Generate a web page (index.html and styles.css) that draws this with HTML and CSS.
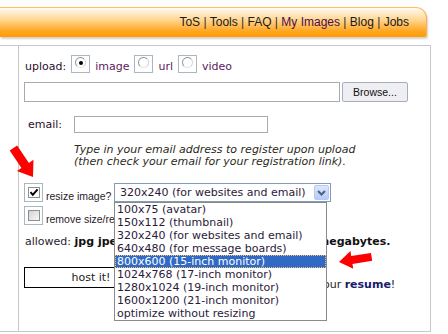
FILE: index.html
```html
<!DOCTYPE html>
<html lang="en">
<head>
    <meta charset="UTF-8">
    <title>Upload</title>
    <link rel="stylesheet" href="styles.css">
</head>
<body>

    <div class="topbar">
        <div class="nav"><a href="#">ToS</a> | <a href="#">Tools</a> | <a href="#">FAQ</a> | <a href="#" class="visited">My Images</a> | <a href="#">Blog</a> | <a href="#">Jobs</a></div>
    </div>

    <div class="main">
        <div class="side"></div>
        <div class="content">

            <div class="row upload-row">
                <span class="lbl upload-lbl">upload:</span>
                <span class="radio on"><span class="ring"></span></span>
                <span class="opt">image</span>
                <span class="radio"><span class="ring"></span></span>
                <span class="opt">url</span>
                <span class="radio"><span class="ring"></span></span>
                <span class="opt">video</span>
            </div>

            <div class="row file-row">
                <span class="field file-field"></span>
                <span class="browse">Browse...</span>
            </div>

            <div class="row email-row">
                <span class="lbl email-lbl">email:</span>
                <span class="field email-field"></span>
            </div>

            <p class="hint">Type in your email address to register upon upload<br>(then check your email for your registration link).</p>

            <div class="row check-row">
                <span class="check on"><span class="box"><svg width="10" height="9" viewBox="0 0 10 9"><path d="M1.5 4.2 L3.8 6.8 L8.6 1.4" fill="none" stroke="#000" stroke-width="2"/></svg></span></span>
                <span class="small resize-lbl">resize image?</span>
                <div class="select">
                    <span class="select-text">320x240 (for websites and email)</span>
                    <span class="select-btn"><svg width="9" height="6" viewBox="0 0 9 6"><path d="M1 1 L4.5 4.5 L8 1" fill="none" stroke="#4d6185" stroke-width="2"/></svg></span>
                    <ul class="options">
                        <li>100x75 (avatar)</li>
                        <li>150x112 (thumbnail)</li>
                        <li>320x240 (for websites and email)</li>
                        <li>640x480 (for message boards)</li>
                        <li class="sel">800x600 (15-inch monitor)</li>
                        <li>1024x768 (17-inch monitor)</li>
                        <li>1280x1024 (19-inch monitor)</li>
                        <li>1600x1200 (21-inch monitor)</li>
                        <li>optimize without resizing</li>
                    </ul>
                </div>
            </div>

            <div class="row check-row2">
                <span class="check"><span class="box"></span></span>
                <span class="small">remove size/resolution bar from thumbnail</span>
            </div>

            <p class="allowed">allowed: <b>jpg jpeg png gif bmp tif tiff swf &lt;= 1.5 megabytes.</b></p>

            <div class="row host-row">
                <button class="host">host it!</button>
                <span class="resume-note">We're hiring! Send us your <a href="#">resume</a>!</span>
            </div>

        </div>
    </div>

    <svg class="arrows" width="448" height="334" viewBox="0 0 448 334">
        <polygon transform="translate(33 177) rotate(56)" points="0,0 -14,-10 -14,-4.5 -35,-4.5 -35,4.5 -14,4.5 -14,10" fill="#f00"/>
        <polygon transform="translate(339 262) rotate(171)" points="0,0 -13,-9 -13,-4 -33,-4 -33,4 -13,4 -13,9" fill="#f00"/>
    </svg>

</body>
</html>
```

FILE: styles.css
```css
* { box-sizing: border-box; margin: 0; padding: 0; }
body {
    font-family: "DejaVu Sans", Verdana, sans-serif;
    font-size: 11px;
    color: #2a1a2a;
    background: #fff;
    position: relative;
    width: 448px;
    height: 334px;
    overflow: hidden;
}
.topbar {
    margin-top: 7px;
    width: 427px;
    height: 30px;
    border-top: 1px solid #fdbf6a;
    border-right: 1px solid #fcb24c;
    border-radius: 0 11px 2px 0;
    background: linear-gradient(#fffaf2, #ffdca0 35%, #ffa620 80%, #ff9c00);
    box-shadow: 1px 2px 2px rgba(0, 0, 0, 0.18);
    text-align: right;
    padding-right: 17px;
}
.nav {
    font-family: "Liberation Sans", Arial, sans-serif;
    font-size: 12px;
    line-height: 28px;
    color: #333;
}
.nav a { color: #1a1a1a; text-decoration: none; }
.nav .visited { color: #4b0f4b; }

.main {
    margin-top: 8px;
    width: 431px;
    height: 287px;
    display: flex;
    border: 1px solid #c8c8c8;
    border-left: none;
}
.side {
    width: 19px;
    border-right: 1px solid #c8c8c8;
}
.content {
    flex: 1;
    padding: 9px 0 0 5px;
}
.row { display: flex; }

.upload-row {
    height: 18px;
    align-items: flex-end;
    gap: 5px;
}
.lbl, .opt { line-height: 12px; }
.upload-lbl { margin-left: 1px; color: #2a0f2a; }
.opt { color: #5c1a5c; }
.radio {
    width: 19px;
    height: 18px;
    border: 1px solid #a9b6c4;
    display: flex;
    justify-content: center;
    padding-top: 1px;
}
.ring {
    width: 11px;
    height: 11px;
    border-radius: 50%;
    border: 1px solid;
    border-color: #8c8c8c #d4d4d4 #e4e4e4 #9a9a9a;
    background: #fff;
    display: flex;
    align-items: center;
    justify-content: center;
}
.radio.on .ring::after {
    content: "";
    width: 4px;
    height: 4px;
    border-radius: 50%;
    background: #000;
}

.file-row { margin-top: 9px; height: 20px; }
.field { border: 1px solid #a5acb2; background: #fff; }
.file-field { width: 316px; height: 20px; }
.browse {
    margin-left: 2px;
    width: 66px;
    height: 20px;
    border: 1px solid #a3afbf;
    border-radius: 2px;
    background: #efeef2;
    font-family: "Liberation Sans", Arial, sans-serif;
    font-size: 10.5px;
    color: #111;
    display: flex;
    align-items: center;
    justify-content: center;
}

.email-row {
    margin-top: 14px;
    height: 17px;
    align-items: center;
}
.email-lbl { width: 50px; padding-left: 4px; color: #2a0f2a; }
.email-field { width: 194px; height: 17px; }

.hint {
    margin: 11px 0 0 50px;
    font-style: italic;
    line-height: 12px;
    color: #2d2a1a;
    white-space: nowrap;
}

.check-row {
    margin-top: 15px;
    height: 19px;
    align-items: flex-end;
}
.check-row2 {
    margin-top: 4px;
    height: 19px;
    align-items: flex-end;
}
.check {
    width: 19px;
    height: 19px;
    border: 1px solid #a9b6c4;
    padding: 3px 0 0 3px;
    flex: none;
}
.check .box {
    display: block;
    width: 12px;
    height: 11px;
    border: 1px solid #8f8f8f;
    background: linear-gradient(135deg, #d2d2d2, #f8f8f8);
}
.check.on .box { background: #fff; }
.check .box svg { display: block; }
.small {
    font-family: "Liberation Sans", Arial, sans-serif;
    font-size: 10.5px;
    line-height: 12px;
    margin-left: 3px;
    white-space: nowrap;
    color: #2a1a2a;
}
.resize-lbl { width: 68px; flex: none; }

.select {
    position: relative;
    width: 217px;
    height: 19px;
    border: 1px solid #7f9db9;
    padding: 1px;
    align-self: flex-start;
    background: #fff;
    display: flex;
    flex: none;
}
.select-text {
    flex: 1;
    padding-left: 4px;
    line-height: 15px;
    white-space: nowrap;
    color: #2a1a3a;
}
.select-btn {
    width: 15px;
    height: 15px;
    border: 1px solid #b9c8ef;
    border-radius: 2px;
    background: linear-gradient(#dde6fb, #b8cbf6);
    display: flex;
    align-items: center;
    justify-content: center;
}
.options {
    position: absolute;
    top: 18px;
    left: -1px;
    width: 213px;
    border: 1px solid #8a8a8a;
    background: #fff;
    list-style: none;
    z-index: 2;
}
.options li {
    height: 13px;
    line-height: 13px;
    padding-left: 2px;
    white-space: nowrap;
    color: #2a1a3a;
}
.options li.sel {
    background: #316ac5;
    color: #fff;
    outline: 1px dotted #f3c46a;
    outline-offset: -1px;
}

.allowed {
    margin: 10px 0 0 1px;
    line-height: 13px;
    white-space: nowrap;
    color: #2a1a2a;
}
.allowed b { color: #111; }

.host-row {
    margin-top: 19px;
    align-items: flex-end;
}
.host {
    width: 134px;
    height: 21px;
    border: 1px solid #000;
    background: #fff;
    font-family: "DejaVu Sans", Verdana, sans-serif;
    font-size: 11px;
    color: #222;
}
.resume-note {
    margin-left: 37px;
    margin-bottom: -3px;
    line-height: 13px;
    white-space: nowrap;
}
.resume-note a {
    font-weight: bold;
    color: #1a1a6e;
    text-decoration: none;
}

.arrows {
    position: absolute;
    top: 0;
    left: 0;
    z-index: 3;
    pointer-events: none;
}
```
